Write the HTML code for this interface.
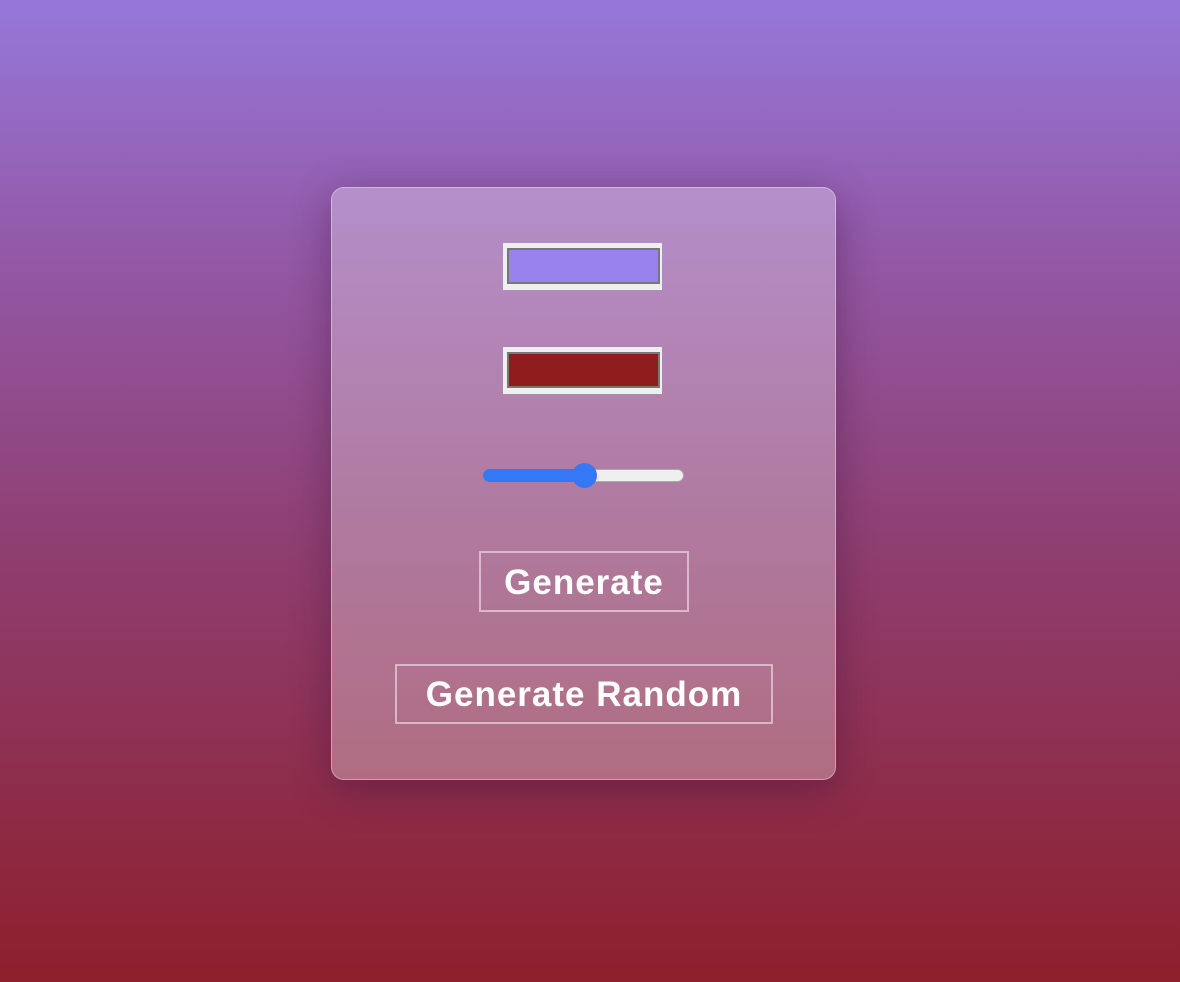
<!DOCTYPE html>
<html><head><style>
html,body{margin:0;padding:0;width:1180px;height:982px;overflow:hidden}
body{background:linear-gradient(to bottom,#9678da 0%,#9359a8 25%,#8f3f72 55%,#8e1f2c 100%);font-family:"Liberation Sans",sans-serif;position:relative}
.card{position:absolute;left:331px;top:187px;width:503px;height:591px;border-radius:13px;background:rgba(255,255,255,0.3);border:1px solid rgba(255,255,255,0.35);box-shadow:0 10px 40px rgba(60,20,60,0.45)}
.col{position:absolute;left:503px;width:159px;height:47px;background:#efefef;box-sizing:border-box}
.col div{position:absolute;left:4px;top:5px;right:2px;bottom:6px;border:2px solid #777;box-sizing:border-box}
.btn{position:absolute;border:2px solid rgba(255,255,255,0.5);box-sizing:border-box;color:#fff;font-weight:bold;font-size:35px;text-align:center;letter-spacing:1px}
</style></head><body>
<div class="card"></div>
<div class="col" style="top:243px"><div style="background:#9883ee"></div></div>
<div class="col" style="top:347px"><div style="background:#8f1d1e"></div></div>
<div style="position:absolute;left:483px;top:469px;width:201px;height:13px;border-radius:7px;background:#efefef;border:1px solid #aaa;box-sizing:border-box"></div>
<div style="position:absolute;left:483px;top:469px;width:102px;height:13px;border-radius:7px;background:#3478f6"></div>
<div style="position:absolute;left:572px;top:463px;width:25px;height:25px;border-radius:50%;background:#3478f6"></div>
<div class="btn" style="left:479px;top:551px;width:210px;height:61px;line-height:59px">Generate</div>
<div class="btn" style="left:395px;top:664px;width:378px;height:60px;line-height:58px">Generate Random</div>
</body></html>
